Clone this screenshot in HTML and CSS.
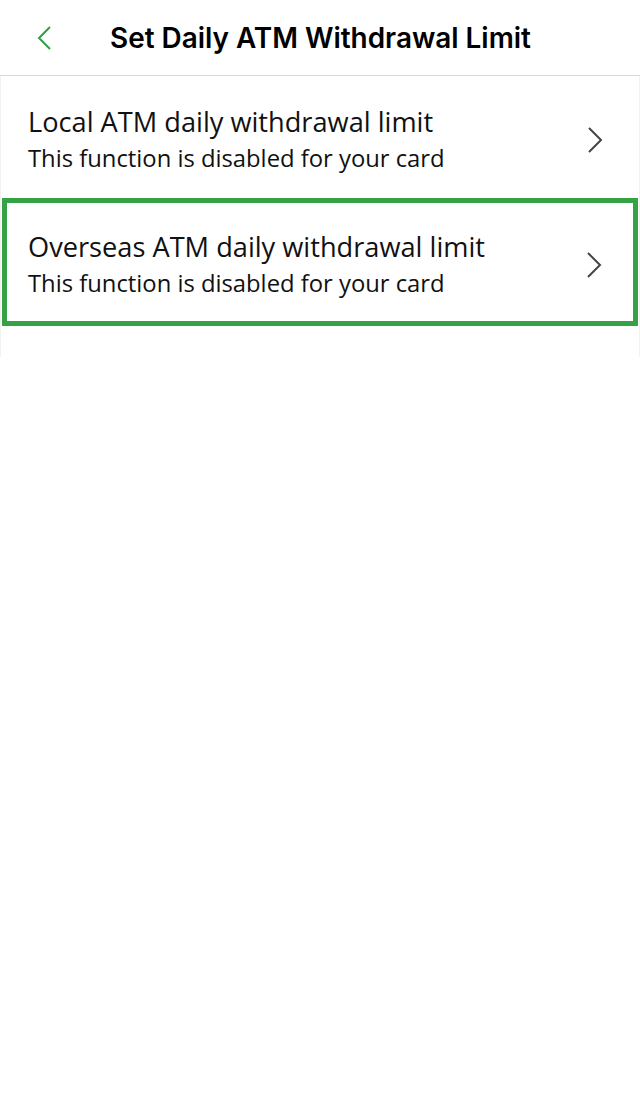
FILE: index.html
```html
<!DOCTYPE html>
<html lang="en">
  <head>
    <meta charset="UTF-8" />
    <meta name="viewport" content="width=device-width, initial-scale=1.0" />
    <title>Set Daily ATM Withdrawal Limit</title>
    <link rel="stylesheet" href="styles.css">
  </head>

  <body>
    <div class="header">
      <a class="back" href="#">
        <svg width="18" height="26" viewBox="0 0 18 26">
          <polyline points="15,2 4,13 15,24" fill="none" stroke="#2fa043" stroke-width="2" />
        </svg>
      </a>
      <h1 class="title">Set Daily ATM Withdrawal Limit</h1>
    </div>

    <ul class="list">
      <li class="item">
        <div class="text">
          <div class="name">Local ATM daily withdrawal limit</div>
          <div class="desc">This function is disabled for your card</div>
        </div>
        <svg class="arrow" width="18" height="28" viewBox="0 0 18 28">
          <polyline points="3,2 15,14 3,26" fill="none" stroke="#444" stroke-width="2" />
        </svg>
      </li>
      <li class="item active">
        <div class="text">
          <div class="name">Overseas ATM daily withdrawal limit</div>
          <div class="desc">This function is disabled for your card</div>
        </div>
        <svg class="arrow" width="18" height="28" viewBox="0 0 18 28">
          <polyline points="3,2 15,14 3,26" fill="none" stroke="#444" stroke-width="2" />
        </svg>
      </li>
    </ul>
  </body>
</html>
```

FILE: styles.css
```css
body {
  margin: 0;
  padding: 0;
  background: #fff;
  font-family: "Open Sans", "Noto Sans", sans-serif;
  color: #111;
}

.header {
  height: 75px;
  border-bottom: 1px solid #d9d9d9;
  display: flex;
  align-items: center;
}
.header .back {
  display: flex;
  width: 110px;
  padding-left: 35px;
  box-sizing: border-box;
}
.header .title {
  margin: 0;
  font-family: Inter, "Liberation Sans", sans-serif;
  font-size: 27.9px;
  font-weight: 600;
  color: #000;
}

ul {
  list-style: none;
  margin: 0;
  padding: 0;
}
ul.list {
  border-left: 1px solid #f2f2f2;
  border-right: 1px solid #f2f2f2;
  padding-bottom: 31px;
}
ul.list .item {
  display: flex;
  align-items: center;
  height: 122px;
  padding: 6px 35px 0 27px;
  box-sizing: border-box;
}
ul.list .item.active {
  height: 128px;
  margin: 0 1px;
  padding: 6px 30px 0 21px;
  border: 5px solid #35a246;
}
.item .text {
  flex: 1;
}
.item .name {
  font-size: 27.2px;
  line-height: 36px;
}
.item .desc {
  font-size: 23.8px;
  line-height: 36px;
}
```
